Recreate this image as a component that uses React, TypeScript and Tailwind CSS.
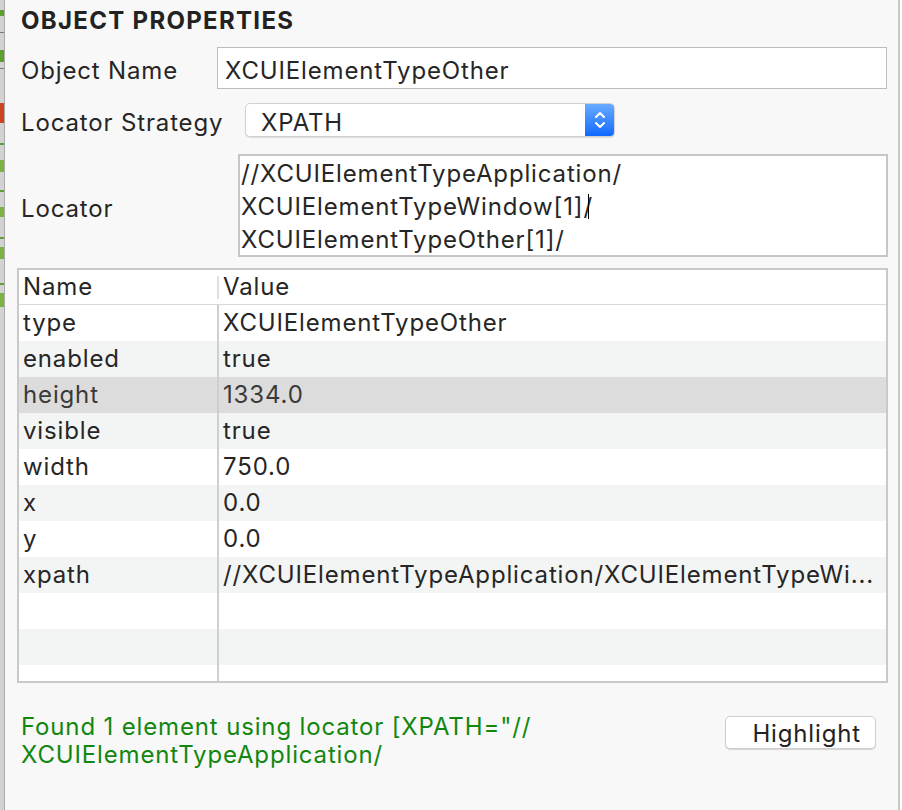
import React from 'react';

const font = { fontFamily: 'Inter, "Open Sans", "Liberation Sans", sans-serif' };

type Prop = { name: string; value: string };

const props: Prop[] = [
  { name: 'type', value: 'XCUIElementTypeOther' },
  { name: 'enabled', value: 'true' },
  { name: 'height', value: '1334.0' },
  { name: 'visible', value: 'true' },
  { name: 'width', value: '750.0' },
  { name: 'x', value: '0.0' },
  { name: 'y', value: '0.0' },
  { name: 'xpath', value: '//XCUIElementTypeApplication/XCUIElementTypeWi...' },
  { name: '', value: '' },
  { name: '', value: '' },
  { name: '', value: '' },
];

// bits of the neighbouring panel that peek in on the left
const marks = [
  { top: 10, h: 6, c: '#5c9e32' },
  { top: 32, h: 1, c: '#7a7a7a' },
  { top: 50, h: 12, c: '#5c9e32' },
  { top: 68, h: 1, c: '#7a7a7a' },
  { top: 103, h: 20, c: '#cc4422' },
  { top: 143, h: 2, c: '#5c9e32' },
  { top: 160, h: 12, c: '#7ab33f' },
  { top: 190, h: 2, c: '#5c9e32' },
  { top: 207, h: 10, c: '#7ab33f' },
  { top: 237, h: 2, c: '#5c9e32' },
  { top: 247, h: 12, c: '#7ab33f' },
  { top: 283, h: 2, c: '#5c9e32' },
  { top: 293, h: 14, c: '#7ab33f' },
];

function SideStrip() {
  let y = 0;
  return (
    <div className="w-[5px] h-full flex flex-col bg-[#d2d2d2] border-r border-[#a9a9a9]">
      {marks.map((m, i) => {
        const gap = m.top - y;
        y = m.top + m.h;
        return (
          <div key={i} className="w-full" style={{ marginTop: gap, height: m.h, backgroundColor: m.c }} />
        );
      })}
    </div>
  );
}

function Chevrons() {
  return (
    <svg width="14" height="22" viewBox="0 0 14 22" fill="none" stroke="white" strokeWidth="2" strokeLinecap="round" strokeLinejoin="round">
      <path d="M3 8 L7 4 L11 8" />
      <path d="M3 14 L7 18 L11 14" />
    </svg>
  );
}

export default function App() {
  return (
    <div className="w-[902px] h-[810px] flex bg-[#f8f8f8] text-[#262626] text-[24px] tracking-[0.85px] overflow-hidden" style={font}>
      <SideStrip />

      <div className="flex-1 flex flex-col pl-[12px] pr-[10px]">
        {/* Cabecera */}
        <div className="h-[40px] flex items-center pl-[4px] pt-[2px]">
          <h1 className="text-[24px] font-bold text-[#222] tracking-[1.3px]">OBJECT PROPERTIES</h1>
        </div>

        {/* Object Name */}
        <div className="mt-[7px] h-[42px] flex items-center">
          <label className="w-[200px] pl-[4px] pt-[6px]">Object Name</label>
          <div className="flex-1 h-full mr-[1px] bg-white border border-[#bdbdbd] flex items-center pl-[7px] pt-[5px]">
            XCUIElementTypeOther
          </div>
        </div>

        {/* Locator Strategy */}
        <div className="mt-[14px] h-[34px] flex items-center">
          <label className="w-[228px] pl-[4px] pt-[6px] whitespace-nowrap">Locator Strategy</label>
          <div className="w-[370px] h-full flex rounded-[5px] bg-white border border-[#d2d2d2] shadow-[0_1px_1px_rgba(0,0,0,0.12)] overflow-hidden">
            <div className="flex-1 flex items-center pl-[15px] pt-[5px]">XPATH</div>
            <div className="w-[29px] h-full flex items-center justify-center bg-gradient-to-b from-[#68aaff] to-[#0a68ff]">
              <Chevrons />
            </div>
          </div>
        </div>

        {/* Locator */}
        <div className="mt-[17px] h-[103px] flex items-center">
          <label className="w-[221px] pl-[4px] pt-[6px]">Locator</label>
          <div className="flex-1 h-full bg-white border-2 border-[#c6c6c6] pl-[1px] pt-[1px] leading-[33px]">
            <div>//XCUIElementTypeApplication/</div>
            <div className="flex items-center">
              XCUIElementTypeWindow[1]/<span className="inline-block w-[1px] h-[25px] bg-black -ml-[5px]" />
            </div>
            <div>XCUIElementTypeOther[1]/</div>
          </div>
        </div>

        {/* Tabla de propiedades */}
        <div className="mt-[11px] h-[415px] bg-white border-2 border-[#c9c9c9] overflow-hidden flex flex-col">
          <div className="h-[35px] shrink-0 flex items-center border-b border-[#d9d9d9]">
            <div className="w-[198px] pl-[4px]">Name</div>
            <div className="w-[2px] h-[23px] bg-[#e0e0e0]" />
            <div className="pl-[4px]">Value</div>
          </div>
          {props.map((p, i) => {
            const selected = p.name === 'height';
            const bg = selected ? 'bg-[#dcdcdc] text-[#3a3a3a]' : i % 2 === 1 ? 'bg-[#f3f4f4]' : 'bg-white';
            return (
              <div key={i} className={`h-[36px] shrink-0 flex items-center ${bg}`}>
                <div className="w-[200px] h-full flex items-center pl-[4px] border-r-2 border-[#cfcfcf]">{p.name}</div>
                <div className="pl-[4px] whitespace-nowrap">{p.value}</div>
              </div>
            );
          })}
        </div>

        {/* Pie */}
        <div className="mt-[30px] flex items-start justify-between pr-[12px]">
          <p className="pl-[4px] leading-[28px] text-[#12870f]">
            Found 1 element using locator [XPATH="//
            <br />
            XCUIElementTypeApplication/
          </p>
          <button className="mt-[3px] w-[151px] h-[33px] flex items-center justify-end pr-[14px] pt-[2px] rounded-[5px] bg-white border border-[#cfcfcf] shadow-[0_1px_1px_rgba(0,0,0,0.15)] text-[#222]">
            Highlight
          </button>
        </div>
      </div>

      <div className="w-[2px] h-full bg-[#c8c8c8]" />
      <div className="w-[2px] h-full bg-white" />
    </div>
  );
}
